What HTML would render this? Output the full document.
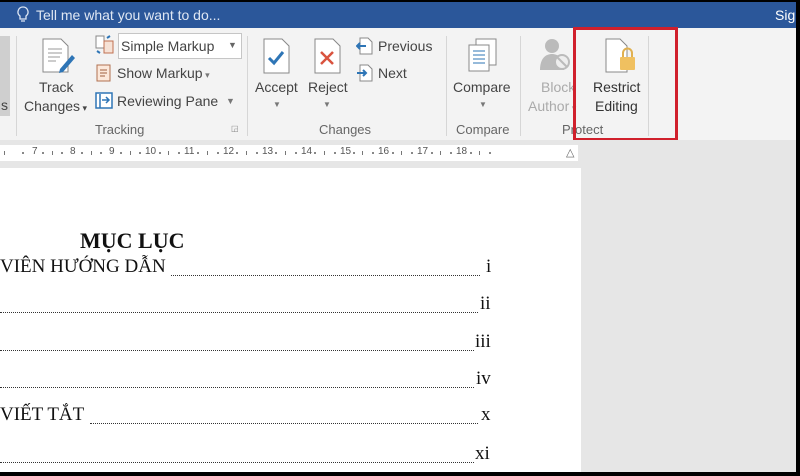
<!DOCTYPE html>
<html><head><meta charset="utf-8"><style>
*{margin:0;padding:0;box-sizing:border-box}
body{width:800px;height:476px;overflow:hidden;background:#000;position:relative;font-family:"Liberation Sans",sans-serif}
.a{position:absolute;white-space:nowrap}
.r{color:#444;font-size:14px}
.lbl{color:#666;font-size:13px}
.doc{font-family:"Liberation Serif",serif;font-size:19px;color:#111}
.dots{position:absolute;height:2px;border-bottom:1.5px dotted #333}
.sep{position:absolute;width:1px;background:#d6d6d6;top:36px;height:100px}
.rn{position:absolute;top:146px;font-size:10px;color:#555}
.rt{position:absolute;top:151px;width:1px;height:4px;background:#777}
.rd{position:absolute;top:152px;width:2px;height:2px;background:#888}
</style></head><body>
<div class="a" style="left:0;top:2px;width:796px;height:26px;background:#2b579a"></div>
<svg class="a" style="left:17px;top:6px" width="12" height="18"><path d="M6 1a5 5 0 0 0-3 9v3h6v-3a5 5 0 0 0-3-9zM4 15h4" stroke="#dde6f3" stroke-width="1.3" fill="none"/></svg>
<div class="a" style="left:36px;top:7px;color:#dfe7f3;font-size:14px">Tell me what you want to do...</div>
<div class="a" style="left:775px;top:7px;color:#fff;font-size:14px">Sig</div>
<div class="a" style="left:0;top:28px;width:796px;height:112px;background:#f3f3f3"></div>
<div class="a" style="left:0;top:36px;width:10px;height:80px;background:#cfcfcf"></div>
<div class="a r" style="left:1px;top:97px">s</div>
<div class="sep" style="left:16px"></div>
<div class="sep" style="left:247px"></div>
<div class="sep" style="left:446px"></div>
<div class="sep" style="left:520px"></div>
<div class="sep" style="left:648px"></div>
<svg class="a" style="left:40px;top:37px" width="38" height="40"><path d="M3 2h18l7 7v26H3z" fill="#fff" stroke="#888"/><path d="M8 12h14M8 16h14M8 20h12M8 24h8" stroke="#999"/><path d="M20 32l12-14 3 3-12 14-4 1z" fill="#2e75b6"/></svg>
<div class="a r" style="left:39px;top:79px">Track</div>
<div class="a r" style="left:24px;top:98px">Changes<span style="font-size:9px"> ▾</span></div>
<svg class="a" style="left:95px;top:35px" width="20" height="20"><rect x="1" y="1" width="8" height="12" fill="#fff" stroke="#888"/><rect x="9" y="6" width="9" height="12" fill="#f6e2d6" stroke="#c07050"/><path d="M12 3l3-2M2 16l3 2" stroke="#2e75b6" stroke-width="2"/></svg>
<div class="a" style="left:118px;top:33px;width:124px;height:26px;background:#fff;border:1px solid #c6c6c6"></div>
<div class="a r" style="left:121px;top:38px">Simple Markup</div>
<div class="a" style="left:228px;top:40px;font-size:9px;color:#666">▼</div>
<svg class="a" style="left:96px;top:64px" width="16" height="18"><rect x="1" y="1" width="13" height="16" fill="#fce8da" stroke="#b07050"/><path d="M4 6h7M4 9h7M4 12h5" stroke="#a06040"/></svg>
<div class="a r" style="left:117px;top:65px">Show Markup<span style="font-size:9px;color:#777"> ▾</span></div>
<svg class="a" style="left:95px;top:92px" width="18" height="17"><rect x="1" y="1" width="16" height="15" fill="#fff" stroke="#2e75b6" stroke-width="1.5"/><path d="M5 2v14M7 8h7M11 5l3 3-3 3" stroke="#2e75b6" stroke-width="1.5" fill="none"/></svg>
<div class="a r" style="left:117px;top:93px">Reviewing Pane</div>
<div class="a" style="left:226px;top:96px;font-size:9px;color:#777">▼</div>
<div class="a lbl" style="left:95px;top:122px">Tracking</div>
<div class="a" style="left:231px;top:124px;font-size:8px;color:#888">◲</div>
<svg class="a" style="left:262px;top:38px" width="30" height="36"><path d="M2 1h18l7 7v27H2z" fill="#fff" stroke="#888"/><path d="M7 20l5 5 9-11" stroke="#2e75b6" stroke-width="3" fill="none"/></svg>
<div class="a r" style="left:255px;top:79px">Accept</div>
<div class="a" style="left:273px;top:100px;font-size:8px;color:#777">▼</div>
<svg class="a" style="left:313px;top:38px" width="30" height="36"><path d="M2 1h18l7 7v27H2z" fill="#fff" stroke="#888"/><path d="M8 14l12 12M20 14L8 26" stroke="#d9533f" stroke-width="2.5"/></svg>
<div class="a r" style="left:308px;top:79px">Reject</div>
<div class="a" style="left:323px;top:100px;font-size:8px;color:#777">▼</div>
<svg class="a" style="left:356px;top:37px" width="18" height="18"><path d="M4 1h8l4 4v12H4z" fill="#fff" stroke="#888"/><path d="M1 9h9M4 6L1 9l3 3" stroke="#2e75b6" stroke-width="2" fill="none"/></svg>
<div class="a r" style="left:378px;top:38px">Previous</div>
<svg class="a" style="left:356px;top:64px" width="18" height="18"><path d="M4 1h8l4 4v12H4z" fill="#fff" stroke="#888"/><path d="M1 9h9M7 6l3 3-3 3" stroke="#2e75b6" stroke-width="2" fill="none"/></svg>
<div class="a r" style="left:378px;top:65px">Next</div>
<div class="a lbl" style="left:319px;top:122px">Changes</div>
<svg class="a" style="left:466px;top:38px" width="34" height="36"><rect x="10" y="1" width="20" height="26" fill="#fff" stroke="#888"/><rect x="3" y="7" width="20" height="26" fill="#fff" stroke="#888"/><path d="M7 13h12M7 17h12M7 21h12M7 25h12" stroke="#2e75b6"/></svg>
<div class="a r" style="left:453px;top:79px">Compare</div>
<div class="a" style="left:479px;top:100px;font-size:8px;color:#777">▼</div>
<div class="a lbl" style="left:456px;top:122px">Compare</div>
<svg class="a" style="left:538px;top:36px" width="36" height="36"><circle cx="14" cy="10" r="7" fill="#bbb"/><path d="M2 34c0-12 6-16 12-16s12 4 12 16z" fill="#bbb"/><circle cx="24" cy="26" r="7" fill="#eee" stroke="#bbb" stroke-width="2"/><path d="M19 21l10 10" stroke="#bbb" stroke-width="2"/></svg>
<div class="a r" style="left:541px;top:79px;color:#aaa">Block</div>
<div class="a r" style="left:528px;top:98px;color:#aaa">Author<span style="font-size:9px"> ▾</span></div>
<svg class="a" style="left:603px;top:38px" width="36" height="36"><path d="M3 1h14l7 7v26H3z" fill="#fff" stroke="#888"/><rect x="17" y="19" width="15" height="13" rx="1" fill="#f0c060"/><path d="M20 19v-4a4.5 4.5 0 0 1 9 0v4" stroke="#e0b050" stroke-width="2" fill="none"/></svg>
<div class="a r" style="left:593px;top:79px;color:#333">Restrict</div>
<div class="a r" style="left:595px;top:98px;color:#333">Editing</div>
<div class="a lbl" style="left:562px;top:122px">Protect</div>
<div class="a" style="left:573px;top:27px;width:105px;height:114px;border:3px solid #d0202c"></div>
<div class="a" style="left:0;top:140px;width:796px;height:332px;background:#e6e6e6"></div>
<div class="a" style="left:0;top:145px;width:578px;height:16px;background:#fff"></div>
<span class="rn" style="left:32px">7</span><span class="rn" style="left:70px">8</span><span class="rn" style="left:109px">9</span><span class="rn" style="left:145px">10</span><span class="rn" style="left:184px">11</span><span class="rn" style="left:223px">12</span><span class="rn" style="left:262px">13</span><span class="rn" style="left:301px">14</span><span class="rn" style="left:340px">15</span><span class="rn" style="left:378px">16</span><span class="rn" style="left:417px">17</span><span class="rn" style="left:456px">18</span>
<span class="rt" style="left:4px"></span><span class="rt" style="left:52px"></span><span class="rt" style="left:91px"></span><span class="rt" style="left:130px"></span><span class="rt" style="left:168px"></span><span class="rt" style="left:207px"></span><span class="rt" style="left:246px"></span><span class="rt" style="left:285px"></span><span class="rt" style="left:324px"></span><span class="rt" style="left:362px"></span><span class="rt" style="left:401px"></span><span class="rt" style="left:440px"></span><span class="rt" style="left:479px"></span>
<span class="rd" style="left:22px"></span><span class="rd" style="left:42px"></span><span class="rd" style="left:61px"></span><span class="rd" style="left:81px"></span><span class="rd" style="left:100px"></span><span class="rd" style="left:120px"></span><span class="rd" style="left:139px"></span><span class="rd" style="left:159px"></span><span class="rd" style="left:178px"></span><span class="rd" style="left:197px"></span><span class="rd" style="left:217px"></span><span class="rd" style="left:236px"></span><span class="rd" style="left:256px"></span><span class="rd" style="left:275px"></span><span class="rd" style="left:295px"></span><span class="rd" style="left:314px"></span><span class="rd" style="left:334px"></span><span class="rd" style="left:353px"></span><span class="rd" style="left:372px"></span><span class="rd" style="left:392px"></span><span class="rd" style="left:411px"></span><span class="rd" style="left:431px"></span><span class="rd" style="left:450px"></span><span class="rd" style="left:470px"></span><span class="rd" style="left:489px"></span>
<span class="a" style="left:566px;top:146px;font-size:11px;color:#666">△</span>
<div class="a" style="left:0;top:168px;width:581px;height:304px;background:#fff"></div>
<div class="a doc" style="left:80px;top:228px;font-weight:bold;font-size:22px">MỤC LỤC</div>
<div class="a doc" style="left:0;top:256px">VIÊN HƯỚNG DẪN</div>
<div class="dots" style="left:171px;top:274px;width:309px"></div>
<div class="a doc" style="left:486px;top:256px">i</div>
<div class="dots" style="left:0;top:311px;width:478px"></div>
<div class="a doc" style="left:480px;top:293px">ii</div>
<div class="dots" style="left:0;top:349px;width:474px"></div>
<div class="a doc" style="left:475px;top:331px">iii</div>
<div class="dots" style="left:0;top:386px;width:474px"></div>
<div class="a doc" style="left:476px;top:368px">iv</div>
<div class="a doc" style="left:0;top:404px">VIẾT TẮT</div>
<div class="dots" style="left:90px;top:422px;width:388px"></div>
<div class="a doc" style="left:481px;top:404px">x</div>
<div class="dots" style="left:0;top:461px;width:474px"></div>
<div class="a doc" style="left:475px;top:443px">xi</div>
</body></html>
